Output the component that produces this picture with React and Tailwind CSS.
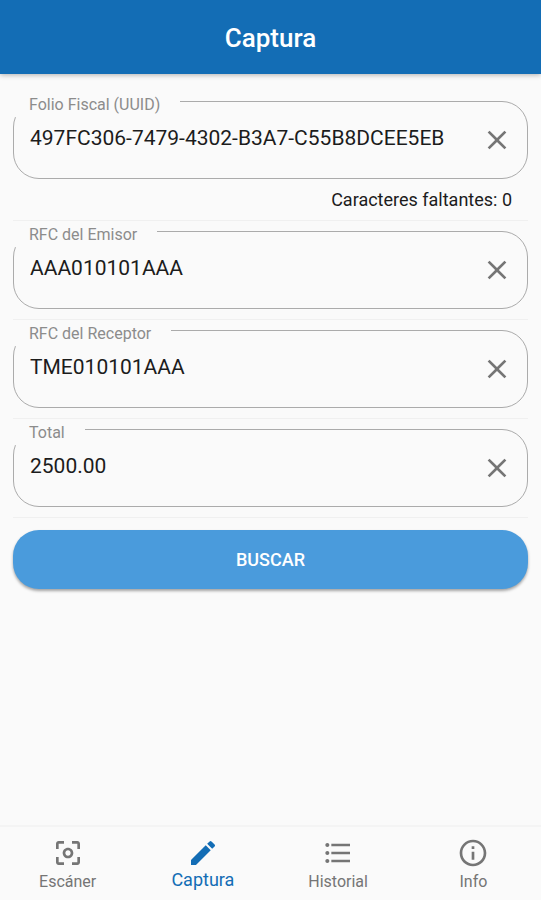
import { useState } from 'react'
import {
  MdCenterFocusWeak,
  MdClose,
  MdEdit,
  MdFormatListBulleted,
  MdInfoOutline,
} from 'react-icons/md'

const UUID_LENGTH = 36

const fields = [
  { id: 'uuid', label: 'Folio Fiscal (UUID)', initial: '497FC306-7479-4302-B3A7-C55B8DCEE5EB', maxLength: UUID_LENGTH },
  { id: 'emisor', label: 'RFC del Emisor', initial: 'AAA010101AAA' },
  { id: 'receptor', label: 'RFC del Receptor', initial: 'TME010101AAA' },
  { id: 'total', label: 'Total', initial: '2500.00' },
]

const tabs = [
  { label: 'Escáner', href: '#escaner', Icon: MdCenterFocusWeak },
  { label: 'Captura', href: '#captura', Icon: MdEdit, active: true },
  { label: 'Historial', href: '#historial', Icon: MdFormatListBulleted },
  { label: 'Info', href: '#info', Icon: MdInfoOutline },
]

/* ── Outlined text field, the label cuts the top left of the border ──── */
function Field({ id, label, initial, maxLength }) {
  const [value, setValue] = useState(initial)

  return (
    <div className="border-b border-[#f0f0f0] py-2.5">
      <div className="relative flex h-[78px] items-center rounded-[26px] border border-[#ababab] pl-4 pr-3.5">
        <label
          htmlFor={id}
          className="absolute -left-px -top-1.5 h-[21px] bg-[#fafafa] pl-4 pr-5 text-[16px] leading-[18px] text-[#8c8c8c]"
        >
          {label}
        </label>
        <input
          id={id}
          type="text"
          value={value}
          maxLength={maxLength}
          onChange={(e) => setValue(e.target.value)}
          className="min-w-0 flex-1 bg-transparent pb-1 text-[21px] leading-6 text-[#1c1c1c] outline-none"
        />
        <button type="button" aria-label={`Borrar ${label}`} onClick={() => setValue('')} className="text-[#757575]">
          <MdClose size={32} />
        </button>
      </div>
      {maxLength && (
        <p className="mt-2.5 pr-4 text-right text-[18px] leading-[21px] text-[#1c1c1c]">
          Caracteres faltantes: {maxLength - value.length}
        </p>
      )}
    </div>
  )
}

function App() {
  return (
    <div className="flex min-h-screen flex-col bg-[#fafafa] font-[Roboto,sans-serif]">
      <header className="flex h-[74px] items-center justify-center bg-[#136db5] pt-0.5 shadow-[0_1px_5px_rgba(0,0,0,0.3)]">
        <h1 className="text-[26px] font-medium leading-8 text-white">Captura</h1>
      </header>

      <main className="flex-1 px-[13px] pt-[17px]">
        <form onSubmit={(e) => e.preventDefault()}>
          {fields.map((f) => (
            <Field key={f.id} {...f} />
          ))}
          <button
            type="submit"
            className="mt-3 h-[59px] w-full rounded-[26px] bg-[#4a9bdc] text-[18px] font-medium text-white shadow-[0_2px_3px_rgba(0,0,0,0.35)]"
          >
            BUSCAR
          </button>
        </form>
      </main>

      <nav className="grid h-[75px] grid-cols-4 border-t-2 border-[#f4f4f4]">
        {tabs.map(({ label, href, Icon, active }) => (
          <a
            key={label}
            href={href}
            aria-current={active ? 'page' : undefined}
            className={`flex flex-col items-center pt-2.5 ${active ? 'text-[#136db5]' : 'text-[#757575]'}`}
          >
            <Icon size={32} />
            <span className={active ? 'text-[18px] leading-[22px]' : 'text-[16px] leading-[25px]'}>{label}</span>
          </a>
        ))}
      </nav>
    </div>
  )
}

export default App
